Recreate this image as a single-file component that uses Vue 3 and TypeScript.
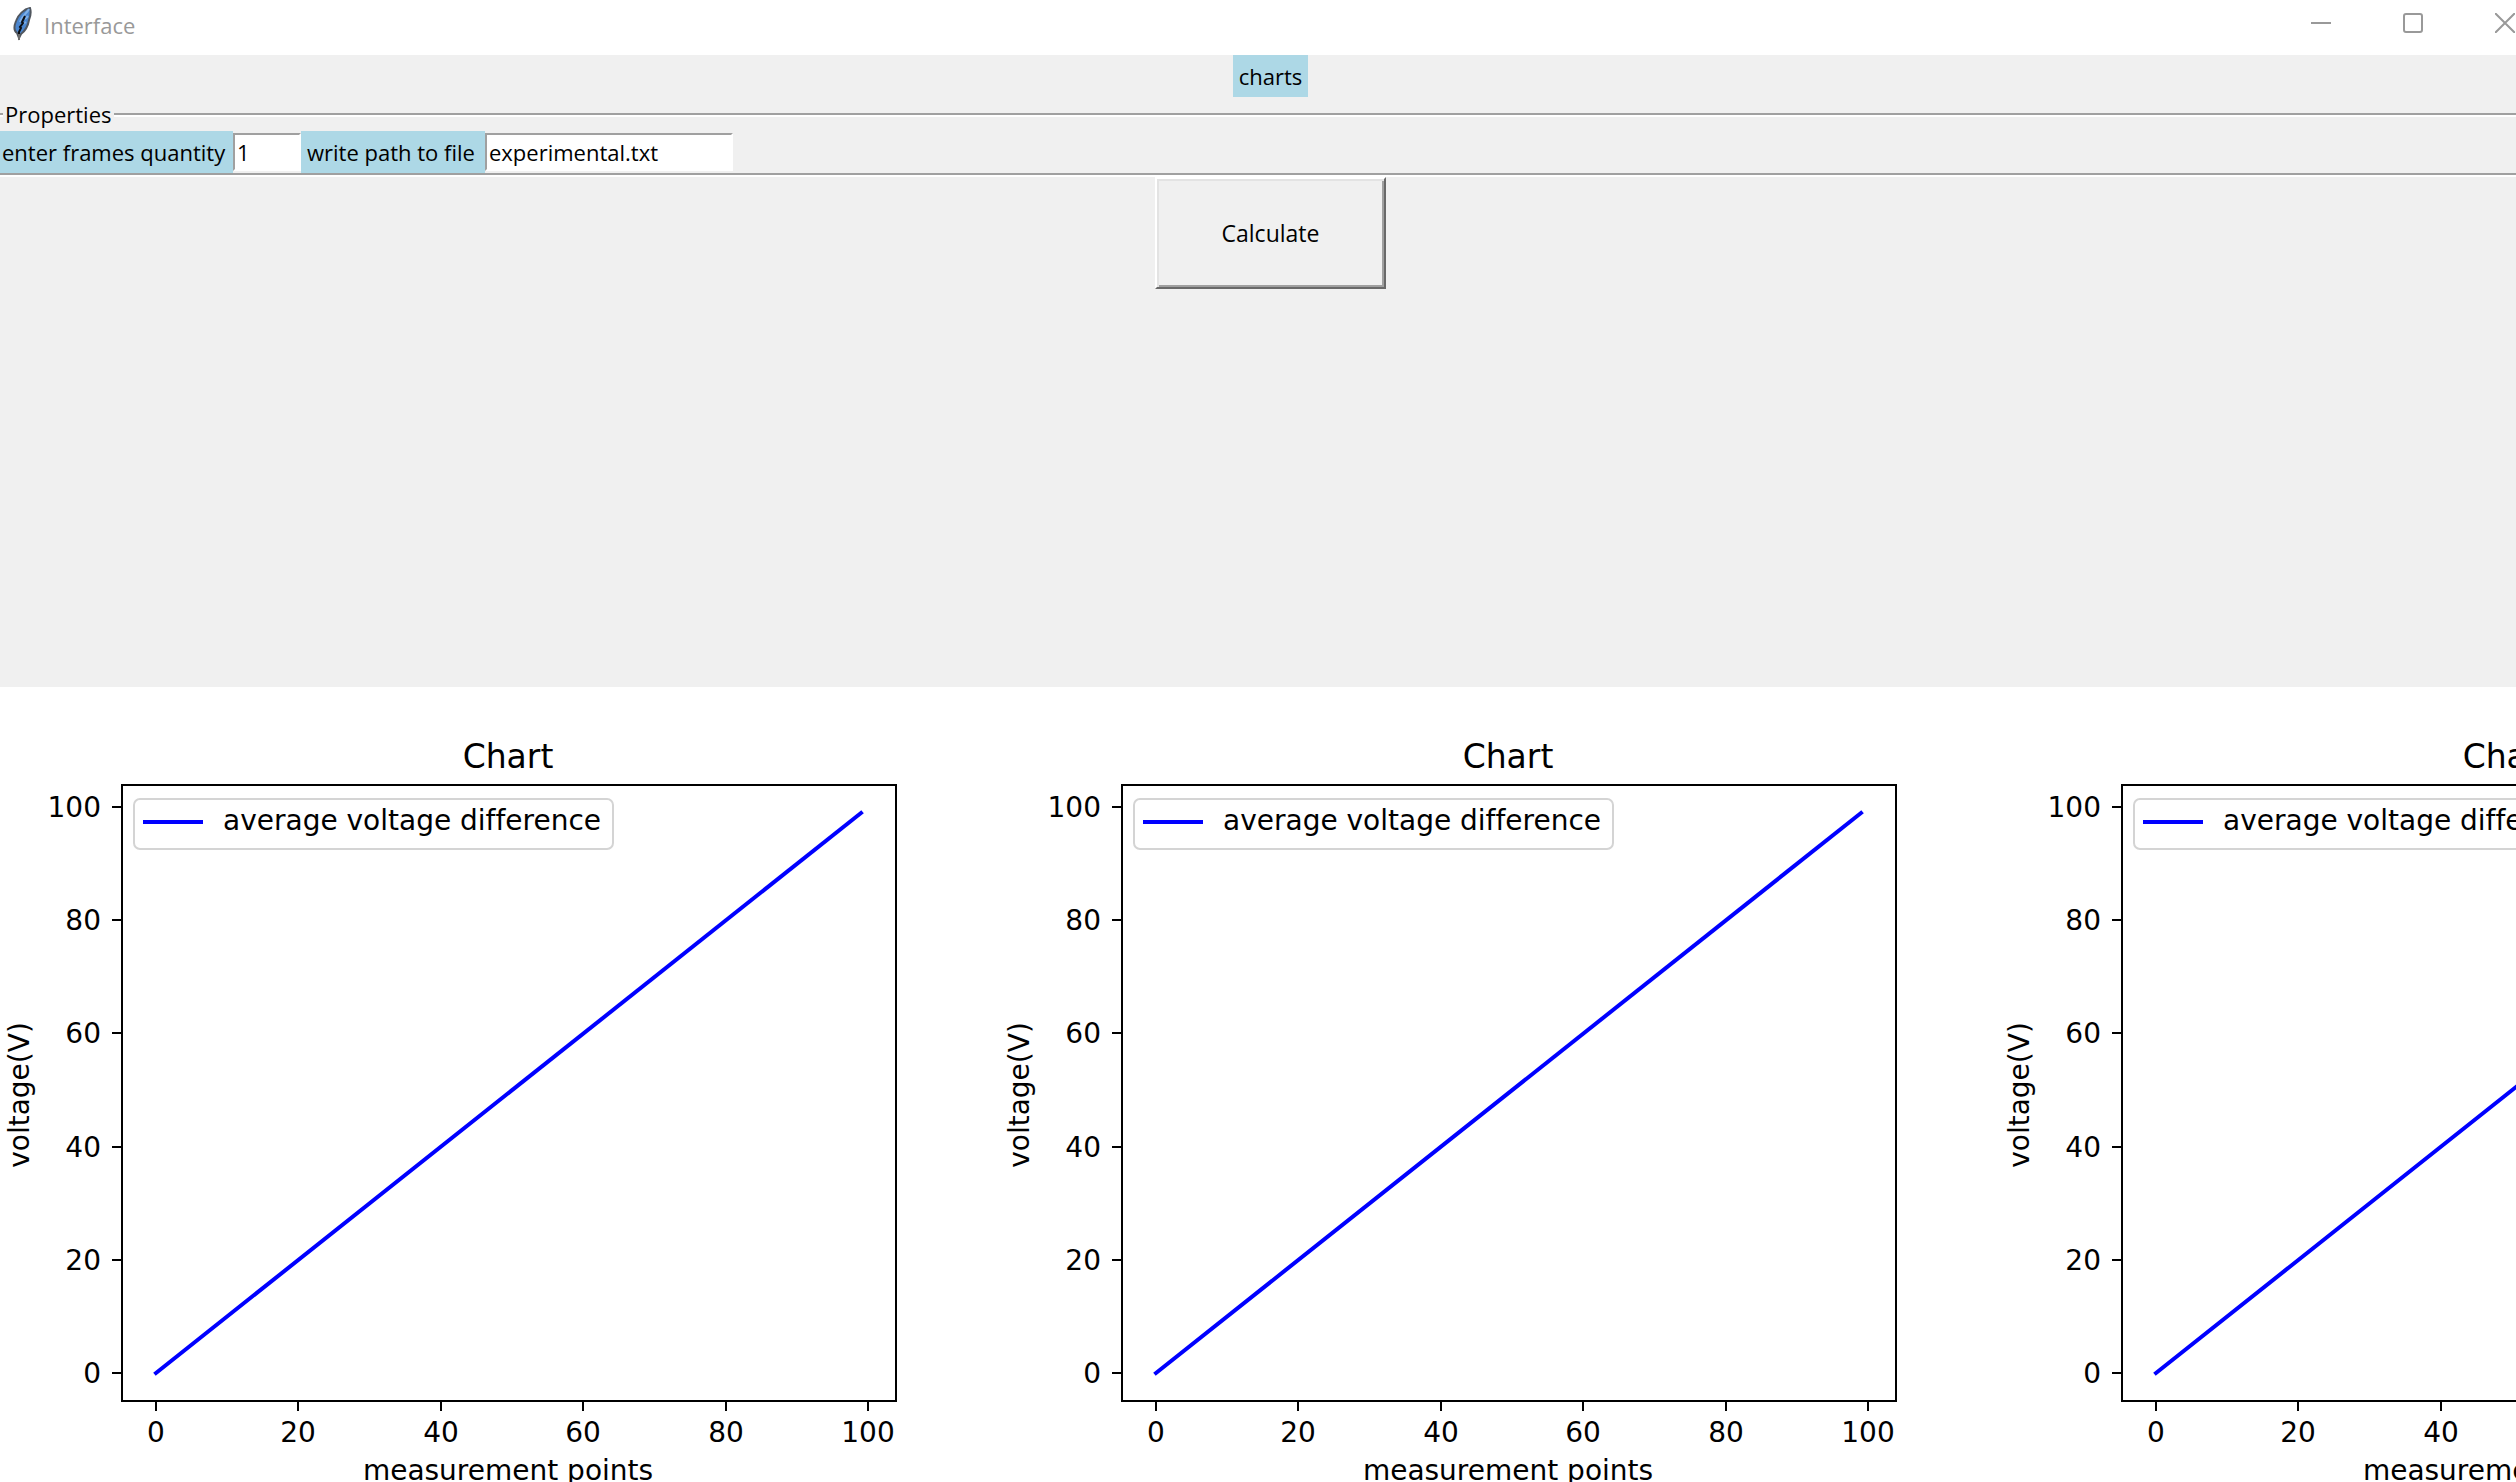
<script setup lang="ts">
import { ref } from 'vue'

const frames = ref('1')
const path = ref('experimental.txt')

const charts = [1, 2, 3]
const ticks = [0, 20, 40, 60, 80, 100]

// Data-to-figure scales of the plot area
const px = (v: number): number => Math.round(159 + v * 7.12)
const py = (v: number): number => Math.round(684 - v * 5.66)
</script>

<template>
  <div class="viewport">
    <div class="window">
      <header class="titlebar">
        <svg class="feather" width="20" height="34" viewBox="0 0 20 34" aria-hidden="true">
          <path d="M17 1 C11 2 5 8 3 14 C1 19 1 24 4 26 L6 31 L8 27 C12 24 15 19 16 13 C18 8 18 4 17 1 Z" fill="#4a86cf" stroke="#50565e" stroke-width="2" />
          <path d="M16 2 C14 6 9 9 7 15 M15 9 L12 12 M13 15 L10 17" fill="none" stroke="#7fb0e8" stroke-width="2" />
          <path d="M12 9 L9 15 L10 16 L7 20 L8 21 L6 25 V31" fill="none" stroke="#0c0f14" stroke-width="2" />
          <path d="M6 27 V33" stroke="#6b6b6b" stroke-width="2" />
        </svg>
        <span class="title">Interface</span>
        <div class="controls">
          <button type="button" aria-label="Minimize">
            <svg width="20" height="20" viewBox="0 0 20 20"><path d="M0 10 H20" /></svg>
          </button>
          <button type="button" aria-label="Maximize">
            <svg width="20" height="20" viewBox="0 0 20 20"><rect x="1" y="1" width="18" height="18" rx="2" /></svg>
          </button>
          <button type="button" aria-label="Close">
            <svg width="20" height="20" viewBox="0 0 20 20"><path d="M0 0 L20 20 M20 0 L0 20" /></svg>
          </button>
        </div>
      </header>

      <main class="panel">
        <div class="heading">charts</div>
        <fieldset class="properties">
          <legend>Properties</legend>
          <div class="row">
            <label class="frames-label" for="frames">enter frames quantity</label>
            <input id="frames" v-model="frames" class="frames" type="text" />
            <label class="path-label" for="path">write path to file</label>
            <input id="path" v-model="path" class="path" type="text" />
          </div>
        </fieldset>
        <button type="button" class="calculate">Calculate</button>
      </main>

      <section class="figures">
        <svg v-for="c in charts" :key="c" class="figure" width="1000" height="800" viewBox="0 0 1000 800">
          <text class="chart-title" x="511" y="79" text-anchor="middle">Chart</text>
          <rect class="spine" x="125" y="96" width="774" height="616" />
          <g v-for="t in ticks" :key="t">
            <path class="spine" :d="`M${px(t)} 712 v10 M125 ${py(t)} h-10`" />
            <text :x="px(t)" y="753" text-anchor="middle">{{ t }}</text>
            <text x="104" :y="py(t) + 10" text-anchor="end">{{ t }}</text>
          </g>
          <path class="series" :d="`M${px(0)} ${py(0)} L${px(99)} ${py(99)}`" />
          <rect class="legend" x="137" y="110" width="479" height="50" rx="6" />
          <path class="series" d="M148 133 H204" />
          <text x="226" y="141">average voltage difference</text>
          <text x="511" y="791" text-anchor="middle">measurement points</text>
          <text transform="translate(32 406) rotate(-90)" text-anchor="middle">voltage(V)</text>
        </svg>
      </section>
    </div>
  </div>
</template>

<style>
body {
  margin: 0;
}
</style>

<style scoped>
.viewport {
  height: 100vh;
  overflow: hidden;
  background: #fff;
}

/* The window is a little wider than the visible screen on both sides */
.window {
  display: flex;
  flex-direction: column;
  height: 100%;
  margin: 0 -28px 0 -3px;
  color: #000;
  font: 22px/30px "Open Sans", "Noto Sans", sans-serif;
  font-variant-ligatures: none;
}

.titlebar {
  display: flex;
  flex: none;
  align-items: flex-start;
  height: 55px;
  padding-left: 16px;
  background: #fff;
}

.feather {
  margin-top: 7px;
}

.title {
  margin: 10px 0 0 11px;
  color: #999;
}

.controls {
  display: flex;
  margin: 0 -7px 0 auto;
}

.controls button {
  display: flex;
  align-items: center;
  justify-content: center;
  width: 92px;
  height: 46px;
  padding: 0;
  border: 0;
  background: none;
}

.controls svg {
  fill: none;
  stroke: #999;
  stroke-width: 2;
}

.panel {
  display: flex;
  flex: none;
  flex-direction: column;
  align-items: center;
  min-height: 632px;
  background: #f0f0f0;
}

.heading,
.row label {
  box-sizing: border-box;
  height: 42px;
  background: #add8e6;
  line-height: 42px;
  white-space: nowrap;
}

.heading {
  padding: 0 6px;
}

.properties {
  align-self: stretch;
  min-width: 0;
  margin: 2px 0;
  padding: 2px 0 0;
  border: solid #a0a0a0;
  border-width: 2px 0;
  box-shadow: 0 2px 0 #fff, inset 0 2px 0 #fff;
}

.properties legend {
  height: 30px;
  margin-left: 6px;
  padding: 0 2px;
  background: #f0f0f0;
}

.row {
  display: flex;
  align-items: center;
  padding-left: 3px;
}

.row .frames-label {
  width: 233px;
  padding-left: 2px;
}

.row .path-label {
  width: 184px;
  padding-left: 6px;
}

.row input {
  box-sizing: border-box;
  height: 38px;
  padding: 0 2px;
  border: 2px solid;
  border-color: #a0a0a0 #fff #fff #a0a0a0;
  border-radius: 0;
  outline: 0;
  background: #fff;
  color: #000;
  font: inherit;
}

.row .frames {
  width: 68px;
}

.row .path {
  width: 248px;
}

.calculate {
  box-sizing: border-box;
  width: 231px;
  height: 112px;
  padding: 0;
  border: 2px solid;
  border-color: #fff #696969 #696969 #fff;
  border-radius: 0;
  box-shadow: inset 2px 2px 0 #e3e3e3, inset -2px -2px 0 #a0a0a0;
  background: #f0f0f0;
  color: #000;
  font: inherit;
  font-size: 23px;
}

.figures {
  display: flex;
  flex: 1;
  min-height: 0;
  padding-top: 2px;
  overflow: hidden;
  background: #fff;
}

.figure {
  flex: none;
  font: 28px "DejaVu Sans", sans-serif;
  font-variant-ligatures: none;
}

.chart-title {
  font-size: 33px;
}

.spine {
  fill: none;
  stroke: #000;
  stroke-width: 2;
}

.series {
  fill: none;
  stroke: #00f;
  stroke-width: 4;
  stroke-linecap: square;
}

.legend {
  fill: #fff;
  stroke: #d4d4d4;
  stroke-width: 2;
}
</style>
